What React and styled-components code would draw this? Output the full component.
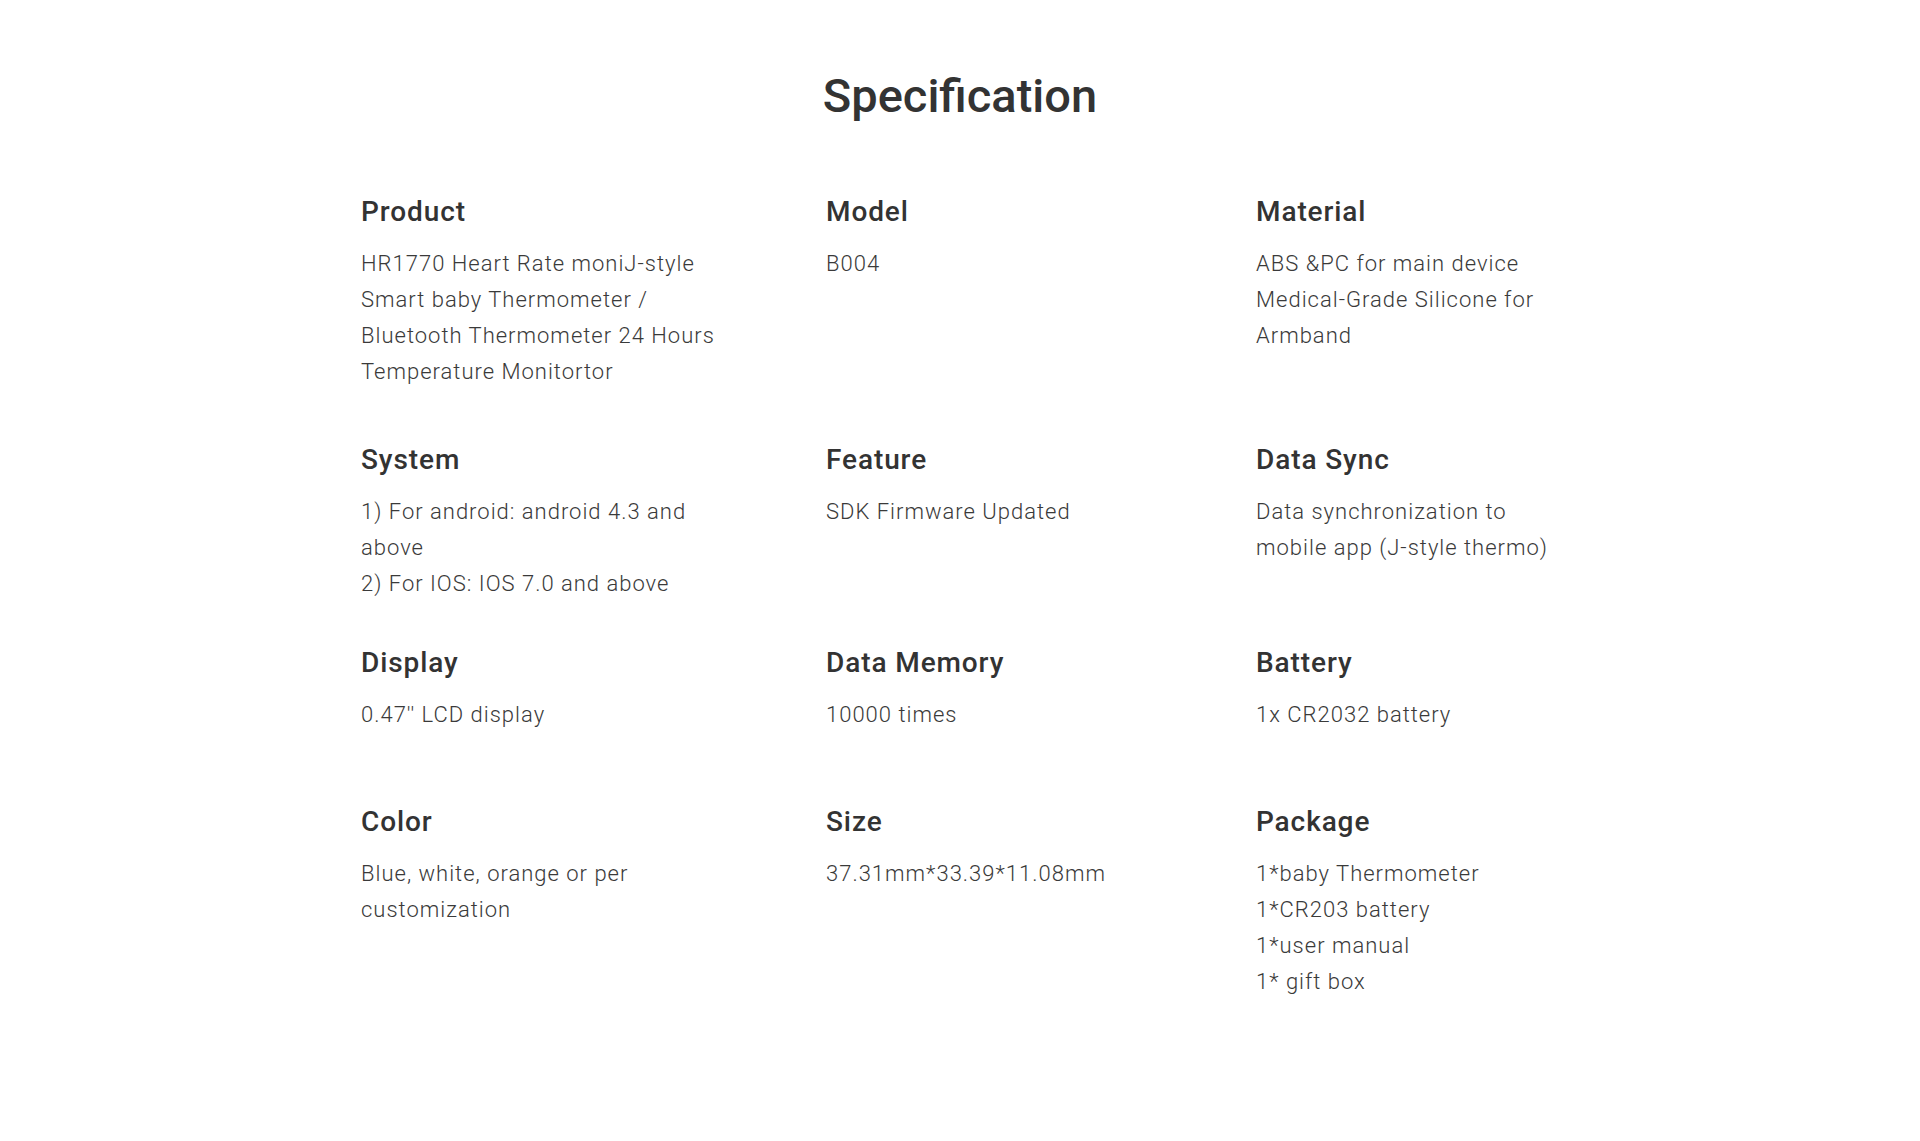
import React from "react";
import styled, { createGlobalStyle } from "styled-components";

const GlobalStyle = createGlobalStyle`
  html, body { margin: 0; padding: 0; background: #ffffff; }
  body { font-family: Roboto, "Liberation Sans", sans-serif; }
`;

const Page = styled.main`
  min-height: 1141px;
  padding-top: 68px;
  box-sizing: border-box;
  background: #fff;
`;

const Title = styled.h1`
  margin: 0;
  text-align: center;
  font-size: 47px;
  line-height: 56px;
  font-weight: 500;
  color: #333;
  letter-spacing: 0px;
`;

const Grid = styled.section`
  width: 1198px;
  margin: 70px auto 0;
  display: grid;
  grid-template-columns: 465px 430px 303px;
  grid-template-rows: 248px 203px 159px auto;
`;

const Item = styled.div`
  max-width: ${(p) => p.$max || 378}px;
`;

const Label = styled.h3`
  margin: 0 0 16px;
  font-size: 28px;
  line-height: 36px;
  font-weight: 500;
  color: #333;
  letter-spacing: 0.9px;
`;

const Value = styled.p`
  margin: 0;
  font-size: 22px;
  line-height: 36px;
  font-weight: 300;
  color: #3a3a3a;
  letter-spacing: 1px;
`;

const specs = [
  { label: "Product", lines: ["HR1770 Heart Rate moniJ-style Smart baby Thermometer / Bluetooth Thermometer 24 Hours Temperature Monitortor"] },
  { label: "Model", lines: ["B004"] },
  { label: "Material", lines: ["ABS &PC for main device", "Medical-Grade Silicone for Armband"], max: 303 },
  { label: "System", lines: ["1) For android: android 4.3 and above", "2) For IOS: IOS 7.0 and above"] },
  { label: "Feature", lines: ["SDK Firmware Updated"] },
  { label: "Data Sync", lines: ["Data synchronization to mobile app (J-style thermo)"], max: 303 },
  { label: "Display", lines: ["0.47'' LCD display"] },
  { label: "Data Memory", lines: ["10000 times"] },
  { label: "Battery", lines: ["1x CR2032 battery"], max: 303 },
  { label: "Color", lines: ["Blue, white, orange or per customization"] },
  { label: "Size", lines: ["37.31mm*33.39*11.08mm"] },
  { label: "Package", lines: ["1*baby Thermometer", "1*CR203 battery", "1*user manual", "1* gift box"], max: 303 },
];

export default function App() {
  return (
    <>
      <GlobalStyle />
      <Page>
        <Title>Specification</Title>
        <Grid>
          {specs.map((s) => (
            <Item key={s.label} $max={s.max}>
              <Label>{s.label}</Label>
              {s.lines.map((l, i) => (
                <Value key={i}>{l}</Value>
              ))}
            </Item>
          ))}
        </Grid>
      </Page>
    </>
  );
}
